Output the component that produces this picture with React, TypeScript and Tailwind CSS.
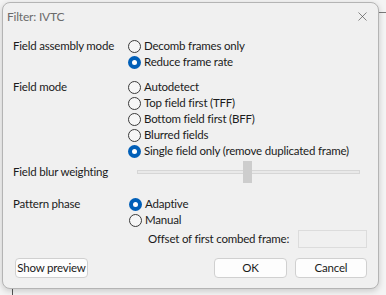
import { X } from "lucide-react";

const Radio = ({ label, checked = false }: { label: string; checked?: boolean }) => (
  <div className="flex items-center h-[16px] whitespace-nowrap">
    {checked ? (
      <span className="w-[13px] h-[13px] shrink-0 rounded-full bg-[#005fb8] flex items-center justify-center">
        <span className="w-[5px] h-[5px] rounded-full bg-white" />
      </span>
    ) : (
      <span className="w-[13px] h-[13px] shrink-0 rounded-full border border-[#3a3a3a] bg-[#f6f6f6]" />
    )}
    <span className="ml-[3px]">{label}</span>
  </div>
);

const Button = ({ children, className = "" }: { children: string; className?: string }) => (
  <button
    className={`h-[20px] rounded-[4px] border border-[#d0d0d0] bg-[#fdfdfd] text-[#1a1a1a] whitespace-nowrap flex items-center justify-center ${className}`}
  >
    {children}
  </button>
);

export default function App() {
  return (
    <div
      className="relative w-[386px] h-[295px] overflow-hidden bg-[#f4f4f4] text-[11.5px] tracking-[-0.2px] leading-[16px] text-[#1b1b1b]"
      style={{ fontFamily: 'Lato, "Noto Sans", sans-serif' }}
    >
      {/* window behind */}
      <div className="absolute left-[378px] right-0 top-[12px] h-px bg-[#7a7a7a]" />
      <div className="absolute left-[12px] top-[288px] bottom-0 w-px bg-[#555]" />

      {/* dialog */}
      <div className="absolute left-[2px] top-[2px] w-[377px] h-[287px] rounded-[8px] border border-[#b4b4b4] bg-[#f0f0f0] shadow-[0_2px_6px_rgba(0,0,0,0.18)]">
        <div className="h-[27px] flex items-center justify-between pl-[4px] pr-[8px]">
          <span className="text-[#6b6b6b] text-[12px]">Filter: IVTC</span>
          <X size={15} strokeWidth={1} className="text-[#444]" />
        </div>

        <div className="pl-[10px] pr-[11px] pt-[8px]">
          <div className="grid grid-cols-[115px_1fr]">
            <div className="h-[16px] flex items-center whitespace-nowrap">Field assembly mode</div>
            <div>
              <Radio label="Decomb frames only" />
              <Radio label="Reduce frame rate" checked />
            </div>
          </div>

          <div className="grid grid-cols-[115px_1fr] mt-[9px]">
            <div className="h-[16px] flex items-center">Field mode</div>
            <div>
              <Radio label="Autodetect" />
              <Radio label="Top field first (TFF)" />
              <Radio label="Bottom field first (BFF)" />
              <Radio label="Blurred fields" />
              <Radio label="Single field only (remove duplicated frame)" checked />
            </div>
          </div>

          <div className="grid grid-cols-[115px_1fr] mt-[2px] h-[22px]">
            <div className="flex items-center whitespace-nowrap">Field blur weighting</div>
            <div className="relative flex items-center">
              <div className="ml-[9px] w-[223px] h-[4px] border border-[#d6d6d6] bg-[#e9e9e9]" />
              <div className="absolute left-[115px] top-0 w-[9px] h-[22px] bg-[#cdcdcd]" />
            </div>
          </div>

          <div className="grid grid-cols-[116px_1fr] mt-[13px]">
            <div className="h-[16px] flex items-center">Pattern phase</div>
            <div>
              <Radio label="Adaptive" checked />
              <Radio label="Manual" />
            </div>
          </div>

          <div className="flex items-center justify-between h-[18px] mt-[2px] pl-[135px]">
            <span className="whitespace-nowrap">Offset of first combed frame:</span>
            <span className="w-[69px] h-[18px] border border-[#dcdcdc] bg-[#f0f0f0]" />
          </div>

          <div className="flex items-center mt-[10px] pl-[2px]">
            <Button className="w-[73px]">Show preview</Button>
            <div className="flex-1" />
            <Button className="w-[73px]">OK</Button>
            <Button className="w-[72px] ml-[8px]">Cancel</Button>
          </div>
        </div>
      </div>
    </div>
  );
}
